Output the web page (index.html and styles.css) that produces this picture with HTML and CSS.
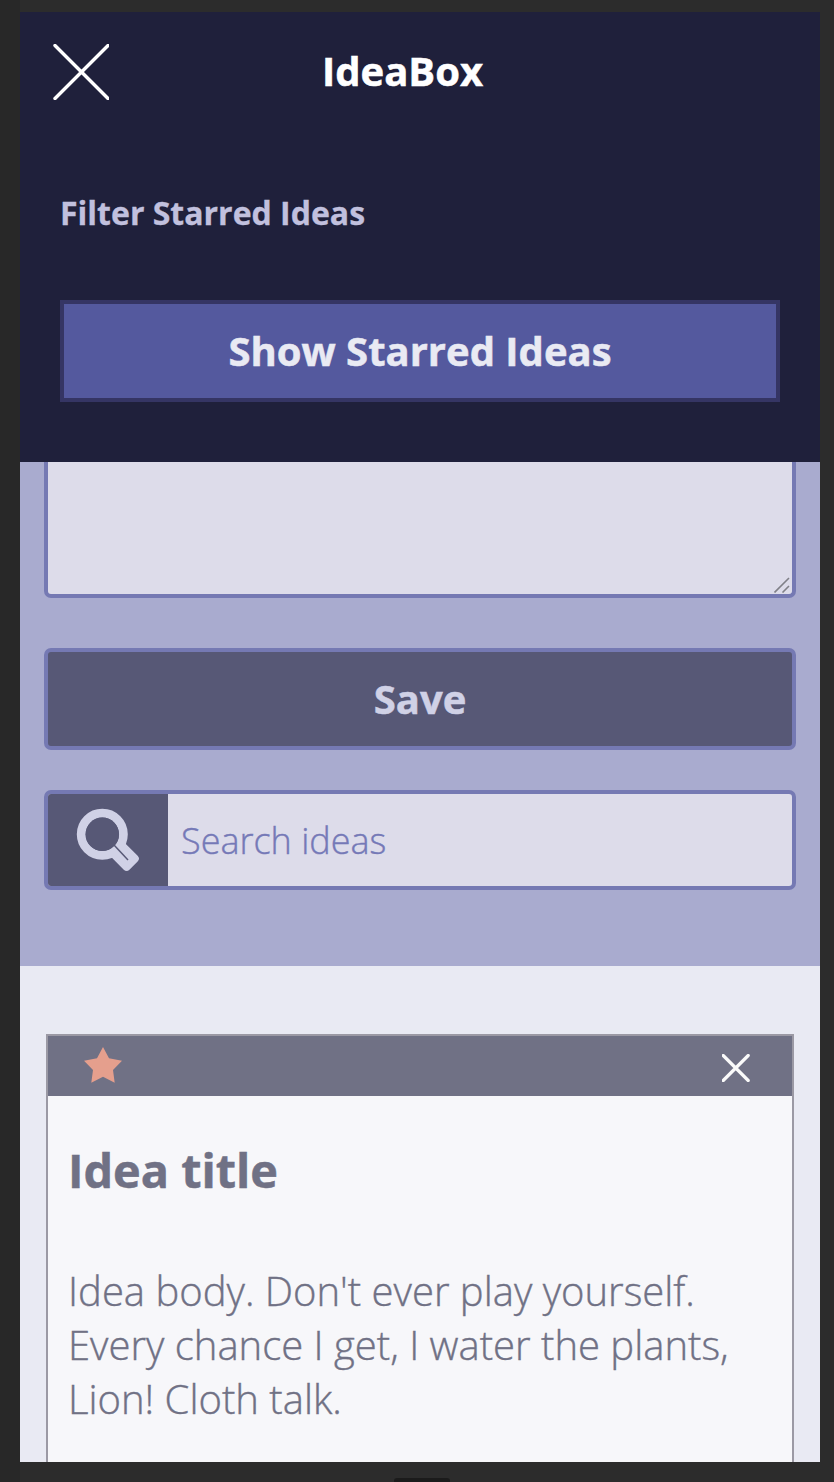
FILE: index.html
```html
<!DOCTYPE html>
<html lang="en">
<head>
<meta charset="utf-8">
<title>IdeaBox</title>
<link rel="stylesheet" href="styles.css">
</head>
<body>
<div class="screen">
  <nav class="menu">
    <header class="bar">
      <svg class="close" viewBox="0 0 56 56"><path d="M2 1.500 55 54.500M55 1.500 2 54.500"/></svg>
      <h1 class="brand">IdeaBox</h1>
    </header>
    <h2 class="filter">Filter Starred Ideas</h2>
    <button class="show">Show Starred Ideas</button>
  </nav>
  <section class="form">
    <div class="body-input"><svg class="grip" viewBox="0 0 16 16"><path d="M.5 15.500 15 1M8.500 15.500 15 9"/></svg></div>
    <button class="save">Save</button>
    <div class="search">
      <span class="search-icon"><svg viewBox="0 0 64 64"><circle class="lens" cx="26.300" cy="26.300" r="21.100"/><path class="stem" d="M45 36.800 58.800 50.600 50.600 58.800 36.800 45Z"/><circle class="glass" cx="26.300" cy="26.300" r="16.700"/><path class="slit" d="M38 37 52 52"/></svg></span>
      <span class="placeholder">Search ideas</span>
    </div>
  </section>
  <main class="ideas">
    <article class="card">
      <header class="card-bar">
        <svg class="star" viewBox="0 0 38 36"><path d="M19 0 25 11.300 38 13.700 29 23 30.700 35.700 19 29.700 7.300 35.700 9 23 0 13.700 13 11.300Z"/></svg>
        <svg class="delete" viewBox="0 0 28 28"><path d="M1.200 1.500 26.200 26.500M26.200 1.500 1.200 26.500"/></svg>
      </header>
      <h3 class="title">Idea title</h3>
      <p class="text">Idea body. Don't ever play yourself. Every chance I get, I water the plants, Lion! Cloth talk.</p>
    </article>
  </main>
</div>
<div class="handle"></div>
</body>
</html>
```
FILE: styles.css
```css
* { box-sizing: border-box; }
body { margin: 0; height: 1482px; padding: 12px 14px 0 20px; background: linear-gradient(90deg, #282828 20px, #2c2c2c 20px); font-family: "Open Sans", sans-serif; overflow: hidden; }
h1, h2, h3, p { margin: 0; }
button { display: block; font-family: inherit; font-weight: 700; font-size: 40px; padding: 0 0 2px; -webkit-text-stroke: .5px; }
.screen { height: 1450px; overflow: hidden; background: #e9eaf3; }
.menu { height: 450px; padding: 0 40px; background: #1f203b; }
.bar { height: 120px; display: grid; grid-template-columns: 262px auto; align-items: center; justify-content: start; }
.close { width: 56px; height: 56px; margin-left: -7px; fill: none; stroke: #fff; stroke-width: 3.4; stroke-linecap: round; }
.brand { padding-bottom: 2px; color: #fff; font-size: 40px; line-height: 54px; -webkit-text-stroke: .5px; }
.filter { margin-top: 59px; color: #c1c0de; font-size: 32px; line-height: 44px; -webkit-text-stroke: .3px; }
.show { width: 720px; height: 102px; margin-top: 65px; border: 4px solid #353564; background: #54599e; color: #e9eaf3; }
.form { height: 504px; padding: 0 24px; background: #a9abcf; }
.body-input { height: 136px; border: 4px solid #7579b3; border-top: 0; border-radius: 0 0 7px 7px; background: #dddcea; display: flex; align-items: flex-end; justify-content: flex-end; padding: 1px 2px; }
.grip { width: 16px; height: 16px; stroke: #808088; stroke-width: 1.6; }
.save { width: 100%; height: 102px; margin-top: 50px; border: 4px solid #7579b3; border-radius: 7px; background: #575876; color: #d0d1e6; }
.search { height: 100px; margin-top: 40px; border: 4px solid #7579b3; border-radius: 7px; background: #dddcea; display: flex; align-items: center; overflow: hidden; }
.search-icon { width: 120px; height: 100%; background: #575876; padding: 14px 0 0 28px; }
.search-icon svg { display: block; width: 64px; height: 64px; }
.lens { fill: none; stroke: #d0d1e6; stroke-width: 8.8; }
.stem { fill: #d0d1e6; stroke: #d0d1e6; stroke-width: 8; stroke-linejoin: round; }
.glass, .slit { fill: #575876; }
.slit { stroke: #575876; stroke-width: 1.5; }
.placeholder { margin-left: 13px; color: #7579b7; font-size: 36px; font-weight: 300; -webkit-text-stroke: .4px; }
.ideas { padding: 68px 26px 0; }
.card { height: 460px; border: 2px solid #9b99a4; background: #f7f7fa; }
.card-bar { height: 60px; padding: 0 42px 0 36px; background: #707185; display: flex; align-items: center; justify-content: space-between; }
.star { width: 38px; height: 36px; margin-bottom: 3px; fill: #e59f8d; }
.delete { width: 28px; height: 28px; margin-top: 3px; stroke: #fafafa; stroke-width: 3.2; stroke-linecap: round; }
.title { margin: 42px 20px 0; color: #707185; font-size: 46.8px; line-height: 64px; -webkit-text-stroke: .5px; }
.text { margin: 62px 20px 0; color: #707185; font-size: 40px; line-height: 54px; font-weight: 300; -webkit-text-stroke: .4px; }
.handle { width: 56px; height: 6px; margin: 16px 0 0 374px; border-radius: 3px; background: #1b1b1b; }
```
